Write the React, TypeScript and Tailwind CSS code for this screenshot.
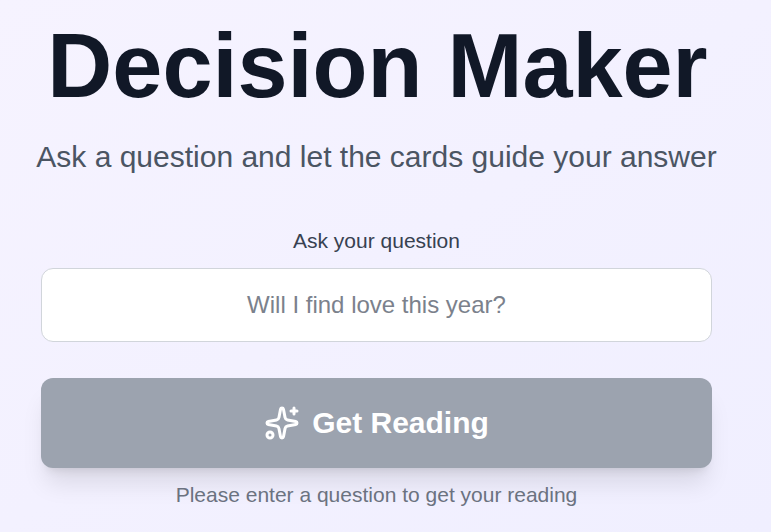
import { Sparkles } from "lucide-react"

export default function App() {
  return (
    <div className="h-[532px] overflow-hidden bg-gradient-to-br from-[#f6f3ff] to-[#f0efff] pl-[41px] font-['Liberation_Sans',Arial,sans-serif]">
      <div className="flex w-[671px] flex-col items-center pt-[21px]">
        <h1 className="pl-[2px] text-[90px] leading-[90px] font-bold whitespace-nowrap text-[#111827]">Decision Maker</h1>
        <p className="mt-[28px] text-[30px] leading-[36px] whitespace-nowrap text-[#4b5563]">
          Ask a question and let the cards guide your answer
        </p>
        <label className="mt-[52px] block text-[21px] leading-[28px] font-normal text-[#374151]">
          Ask your question
        </label>
        <input
          readOnly
          placeholder="Will I find love this year?"
          className="mt-[13px] block h-[74px] w-full rounded-[12px] border border-[#d1d5db] bg-white px-4 text-center text-[24px] outline-none placeholder:text-[#7b818c]"
        />
        <button className="mt-[36px] flex h-[90px] w-full items-center justify-center gap-[12px] rounded-[12px] bg-[#9ca3af] text-[30px] font-bold text-white shadow-xl">
          <Sparkles className="h-9 w-9" />
          <span className="mb-[2px]">Get Reading</span>
        </button>
        <p className="mt-[13px] text-[21px] leading-[28px] whitespace-nowrap text-[#6b7280]">
          Please enter a question to get your reading
        </p>
      </div>
    </div>
  )
}
